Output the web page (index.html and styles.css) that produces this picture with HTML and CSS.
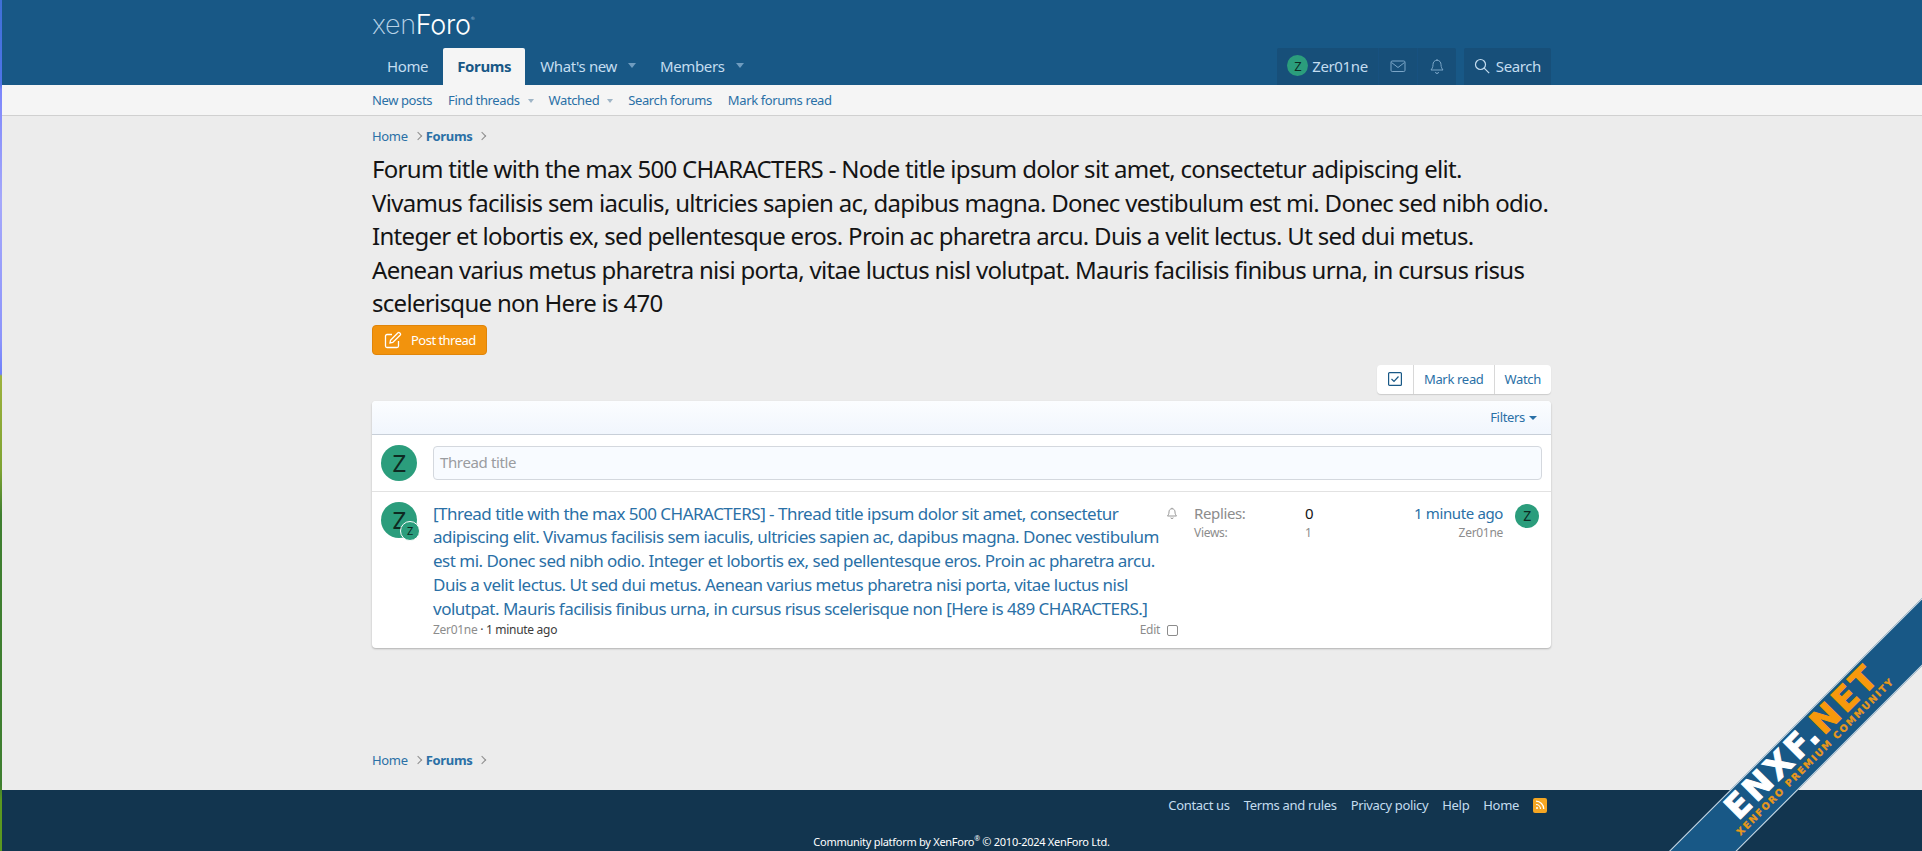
FILE: index.html
```html
<!DOCTYPE html>
<html>
<head>
  <meta charset="utf-8">
  <title>Forum title | XenForo</title>
  <link rel="stylesheet" href="styles.css">
</head>
<body>
  <div class="strip"></div>

  <header class="header">
    <div class="inner">
      <div class="logo"><span class="logo-xen">xen</span><span class="logo-foro">Foro</span><sup>®</sup></div>
      <div class="nav-row">
        <nav class="nav">
          <a class="nav-link">Home</a>
          <a class="nav-link active">Forums</a>
          <a class="nav-link">What's new<i class="caret"></i></a>
          <a class="nav-link">Members<i class="caret"></i></a>
        </nav>
        <div class="nav-user">
          <div class="nav-group">
            <a class="nav-item user"><span class="avatar avatar-xs">Z</span>Zer01ne</a>
            <a class="nav-item icon">
              <svg width="16" height="16" viewBox="0 0 16 16" fill="none" stroke="currentColor"><rect x="1" y="3" width="14" height="10.5" rx="1.2"/><path d="M1.5 4.5 8 9.5l6.500-5"/></svg>
            </a>
            <a class="nav-item icon">
              <svg width="16" height="16" viewBox="0 0 16 16" fill="none" stroke="currentColor"><path d="M8 1v1.300M8 2.300c-2.600 0-4 2-4 4.300 0 2.800-1 4-2 5.400h12c-1-1.400-2-2.600-2-5.400 0-2.300-1.400-4.300-4-4.300zM6.500 14a1.500 1.500 0 0 0 3 0"/></svg>
            </a>
          </div>
          <div class="nav-group">
            <a class="nav-item search">
              <svg width="16" height="16" viewBox="0 0 16 16" fill="none" stroke="currentColor" stroke-width="1.2"><circle cx="6.500" cy="6.500" r="5"/><path d="m10.200 10.200 5 5"/></svg>
              Search
            </a>
          </div>
        </div>
      </div>
    </div>
  </header>

  <div class="subnav">
    <div class="inner subnav-row">
      <a>New posts</a>
      <a>Find threads<i class="caret small"></i></a>
      <a>Watched<i class="caret small"></i></a>
      <a>Search forums</a>
      <a>Mark forums read</a>
    </div>
  </div>

  <main class="inner main">
    <ul class="crumbs">
      <li>Home</li>
      <li class="chev"></li>
      <li class="current">Forums</li>
      <li class="chev"></li>
    </ul>

    <h1 class="title">Forum title with the max 500 CHARACTERS - Node title ipsum dolor sit amet, consectetur adipiscing elit. Vivamus facilisis sem iaculis, ultricies sapien ac, dapibus magna. Donec vestibulum est mi. Donec sed nibh odio. Integer et lobortis ex, sed pellentesque eros. Proin ac pharetra arcu. Duis a velit lectus. Ut sed dui metus. Aenean varius metus pharetra nisi porta, vitae luctus nisl volutpat. Mauris facilisis finibus urna, in cursus risus scelerisque non Here is 470</h1>

    <a class="post-btn">
      <svg width="18" height="18" viewBox="0 0 18 18" fill="none" stroke="currentColor" stroke-width="1.300"><path d="M8 3.500H3a1.500 1.500 0 0 0-1.500 1.500v10A1.500 1.500 0 0 0 3 16.500h10a1.500 1.500 0 0 0 1.500-1.500v-5"/><path d="M6.500 9.200 14 1.700a1.100 1.100 0 0 1 1.500 0l.8.8a1.100 1.100 0 0 1 0 1.500l-7.500 7.500-2.800.5z"/></svg>
      Post thread
    </a>

    <div class="actions">
      <div class="btn-group">
        <a class="btn btn-check">
          <svg width="14" height="14" viewBox="0 0 14 14" fill="none" stroke="#185886" stroke-width="1.200"><rect x=".6" y=".6" width="12.800" height="12.800" rx="1"/><path d="m3.500 7 2.500 2.500 4.500-5"/></svg>
        </a>
        <a class="btn">Mark read</a>
        <a class="btn">Watch</a>
      </div>
    </div>

    <section class="block">
      <div class="filter-bar"><a>Filters<i class="caret blue"></i></a></div>

      <div class="quick">
        <span class="avatar avatar-m">Z</span>
        <div class="quick-input">Thread title</div>
      </div>

      <div class="thread">
        <div class="thread-avatar">
          <span class="avatar avatar-m">Z</span>
          <span class="avatar avatar-mini">Z</span>
        </div>
        <div class="thread-main">
          <div class="thread-top">
            <a class="thread-title">[Thread title with the max 500 CHARACTERS] - Thread title ipsum dolor sit amet, consectetur adipiscing elit. Vivamus facilisis sem iaculis, ultricies sapien ac, dapibus magna. Donec vestibulum est mi. Donec sed nibh odio. Integer et lobortis ex, sed pellentesque eros. Proin ac pharetra arcu. Duis a velit lectus. Ut sed dui metus. Aenean varius metus pharetra nisi porta, vitae luctus nisl volutpat. Mauris facilisis finibus urna, in cursus risus scelerisque non [Here is 489 CHARACTERS.]</a>
            <svg class="thread-bell" width="12" height="14" viewBox="0 0 16 16" fill="none" stroke="#8c8c8c" stroke-width="1.200"><path d="M8 1v1.300M8 2.300c-2.600 0-4 2-4 4.300 0 2.800-1 4-2 5.400h12c-1-1.400-2-2.600-2-5.400 0-2.300-1.400-4.300-4-4.300zM6.500 14a1.500 1.500 0 0 0 3 0"/></svg>
          </div>
          <div class="thread-meta">
            <div><span class="muted">Zer01ne</span> · 1 minute ago</div>
            <div class="thread-edit"><span class="muted">Edit</span><i class="check"></i></div>
          </div>
        </div>
        <dl class="stats">
          <div class="stat-big"><dt>Replies:</dt><dd>0</dd></div>
          <div class="stat-small"><dt>Views:</dt><dd>1</dd></div>
        </dl>
        <div class="latest">
          <a>1 minute ago</a>
          <span>Zer01ne</span>
        </div>
        <span class="avatar avatar-s">Z</span>
      </div>
    </section>

    <ul class="crumbs crumbs-bottom">
      <li>Home</li>
      <li class="chev"></li>
      <li class="current">Forums</li>
      <li class="chev"></li>
    </ul>
  </main>

  <footer class="footer">
    <div class="inner">
      <div class="footer-links">
        <a>Contact us</a>
        <a>Terms and rules</a>
        <a>Privacy policy</a>
        <a>Help</a>
        <a>Home</a>
        <span class="rss">
          <svg width="10" height="10" viewBox="0 0 10 10" fill="none" stroke="#fff" stroke-width="1.200"><path d="M1 1.200a8 8 0 0 1 7.800 7.800M1 4.500A4.500 4.500 0 0 1 5.500 9"/><circle cx="2" cy="8" r="1" fill="#fff" stroke="none"/></svg>
        </span>
      </div>
      <div class="copyright">Community platform by XenForo<sup>®</sup> © 2010-2024 XenForo Ltd.</div>
    </div>
  </footer>

  <div class="ribbon-box">
    <div class="ribbon">
      <div class="ribbon-big">ENXF<span class="dot">.</span><span class="net">NET</span></div>
      <div class="ribbon-small">XENFORO PREMIUM COMMUNITY</div>
    </div>
  </div>
</body>
</html>
```

FILE: styles.css
```css
:root {
  --blue: #185886;
  --link: #2a70a6;
  --muted: #8c8c8c;
  --green: #2b9d7c;
}
* {
  letter-spacing: -0.025em;
}
html, body {
  height: 851px;
  overflow: hidden;
}
body {
  margin: 0;
  padding-left: 2px;
  box-sizing: border-box;
  position: relative;
  display: flex;
  flex-direction: column;
  background: #ececec;
  color: #141414;
  font-family: "Noto Sans", sans-serif;
  font-size: 13px;
}
a {
  color: var(--link);
  text-decoration: none;
}
ul, dl, dd {
  margin: 0;
  padding: 0;
  list-style: none;
}
.inner {
  width: 1179px;
  margin: 0 auto 0 370px;
}
.strip {
  position: absolute;
  left: 0;
  top: 0;
  bottom: 0;
  width: 2px;
  background: linear-gradient(#3f6fd6 0, #4f74e8 84px, #7c86fb 90px, #a5a8fb 200px, #8c94fb 340px, #6f80fb 374px, #9db23e 376px, #7ea332 470px, #3f7f30 515px, #3f7f30 785px, #5b9820 800px);
}

/* header */
.header {
  background: var(--blue);
  height: 85px;
}
.logo {
  height: 48px;
  padding-top: 11px;
  box-sizing: border-box;
  font-family: "Inter", sans-serif;
  font-weight: 200;
  font-size: 27px;
  line-height: 28px;
}
.logo span {
  letter-spacing: -0.3px;
}
.logo-xen {
  color: #b9d2e6;
}
.logo-foro {
  color: #fff;
  font-weight: 300;
}
.logo sup {
  font-size: 6px;
  color: #b9d2e6;
  vertical-align: 13px;
  line-height: 0;
}
.nav-row {
  display: flex;
  justify-content: space-between;
  height: 37px;
}
.nav {
  display: flex;
}
.nav-link {
  display: flex;
  align-items: center;
  padding: 0 15px 2px;
  color: #c4ddf0;
  font-size: 15px;
}
.nav-link.active {
  padding: 0 14px 2px;
  background: #f5f5f5;
  color: var(--blue);
  font-weight: 700;
  border-radius: 2px 2px 0 0;
}
.caret {
  display: inline-block;
  width: 0;
  height: 0;
  margin: 0 -6px 0 11px;
  border-style: solid;
  border-color: transparent;
  border-width: 5px 4px 0;
  border-top-color: #6f9cbf;
}
.caret.small {
  margin: 0 -1px 0 8px;
  vertical-align: 2px;
  border-width: 4px 3.500px 0;
  border-top-color: #9fb5c6;
}
.caret.blue {
  margin: 0 0 0 4px;
  vertical-align: 2px;
  border-width: 4px 4px 0;
  border-top-color: var(--link);
}
.nav-user {
  display: flex;
  gap: 8px;
}
.nav-group {
  display: flex;
  background: #174f79;
  border-radius: 2px 2px 0 0;
}
.nav-item {
  display: flex;
  align-items: center;
  padding-bottom: 2px;
  color: #c4ddf0;
  font-size: 15px;
}
.nav-item.user {
  gap: 4px;
  padding: 0 10px 2px;
}
.nav-item.icon {
  width: 38px;
  justify-content: center;
  color: #7ba6c8;
  border-left: 1px solid #175180;
}
.nav-item.search {
  gap: 6px;
  padding: 0 10px 2px;
}
.avatar {
  display: inline-flex;
  align-items: center;
  justify-content: center;
  border-radius: 50%;
  background: var(--green);
  color: #0e2a22;
  flex: none;
}
.avatar-xs {
  width: 21px;
  height: 21px;
  font-size: 13px;
}
.avatar-s {
  width: 24px;
  height: 24px;
  font-size: 14px;
}
.avatar-m {
  width: 36px;
  height: 36px;
  font-size: 24px;
}
.avatar-mini {
  width: 18px;
  height: 18px;
  font-size: 11px;
  position: absolute;
  right: -3px;
  bottom: -3px;
  border: 1px solid #fff;
}

/* sub nav */
.subnav {
  background: #f5f5f5;
  border-bottom: 1px solid #d0d0d0;
  height: 30px;
}
.subnav-row {
  display: flex;
  align-items: center;
  gap: 16px;
  height: 30px;
  font-size: 13px;
}
.subnav-row a {
  letter-spacing: -0.03em;
}

/* main */
.main {
  flex: 1;
  display: flex;
  flex-direction: column;
}
.crumbs {
  display: flex;
  align-items: center;
  gap: 5px;
  height: 18px;
  margin-top: 11px;
  color: var(--link);
}
.crumbs .current {
  font-weight: 700;
}
.chev {
  width: 5px;
  height: 5px;
  margin-left: 2px;
  border-top: 1px solid #8c8c8c;
  border-right: 1px solid #8c8c8c;
  transform: rotate(45deg);
}
.crumbs-bottom {
  margin-top: auto;
  margin-bottom: 21px;
}
.title {
  margin: 7px 0 0;
  padding-right: 1px;
  font-size: 24px;
  font-weight: 400;
  line-height: 33.500px;
  letter-spacing: -0.029em;
  color: #141414;
}
.post-btn {
  display: inline-flex;
  align-items: center;
  align-self: flex-start;
  gap: 9px;
  height: 30px;
  margin-top: 5px;
  padding: 0 10px 0 11px;
  box-sizing: border-box;
  background: #f2930d;
  border: 1px solid #e0850a;
  border-radius: 4px;
  color: #fff;
  font-size: 13px;
  letter-spacing: -0.04em;
}
.actions {
  display: flex;
  justify-content: flex-end;
  margin-top: 10px;
}
.btn-group {
  display: flex;
  height: 29px;
  background: #fff;
  border-radius: 4px;
  box-shadow: 0 1px 1px #ccc;
}
.btn {
  display: flex;
  align-items: center;
  padding: 0 10px;
  border-left: 1px solid #d8d8d8;
  font-size: 13px;
}
.btn:first-child {
  border-left: 0;
}
.btn-check {
  padding: 0 11px;
}

/* thread list */
.block {
  margin-top: 7px;
  background: #fff;
  border-radius: 4px;
  box-shadow: 0 1px 2px rgba(0, 0, 0, 0.25);
}
.filter-bar {
  display: flex;
  justify-content: flex-end;
  align-items: center;
  height: 34px;
  padding-right: 14px;
  box-sizing: border-box;
  background: linear-gradient(#fbfdff, #f1f6fd);
  border-bottom: 1px solid #c8cfd8;
  border-radius: 4px 4px 0 0;
}
.quick {
  display: flex;
  align-items: center;
  gap: 16px;
  height: 57px;
  padding: 0 9px;
  box-sizing: border-box;
  border-bottom: 1px solid #e2e2e2;
}
.quick-input {
  flex: 1;
  height: 34px;
  line-height: 31px;
  padding-left: 6px;
  box-sizing: border-box;
  background: #f8fbff;
  border: 1px solid #d4d8de;
  border-radius: 4px;
  color: #9a9ca0;
  font-size: 15px;
}
.thread {
  display: flex;
  align-items: flex-start;
  padding: 10px 12px 10px 9px;
}
.thread-avatar {
  position: relative;
  width: 36px;
  height: 36px;
  flex: none;
}
.thread-main {
  width: 745px;
  margin-left: 16px;
}
.thread-top {
  display: flex;
  justify-content: space-between;
}
.thread-title {
  width: 733px;
  font-size: 17px;
  line-height: 23.800px;
  letter-spacing: -0.03em;
  color: var(--link);
}
.thread-bell {
  margin-top: 4px;
}
.thread-meta {
  display: flex;
  justify-content: space-between;
  font-size: 12px;
  line-height: 16px;
  margin-top: 2px;
  color: #3c3c3c;
}
.muted {
  color: #8c8c8c;
}
.thread-edit {
  display: flex;
  align-items: center;
  gap: 7px;
}
.check {
  display: block;
  width: 9px;
  height: 9px;
  border: 1px solid #8c8c8c;
  border-radius: 2px;
}
.stats {
  width: 123px;
  margin-left: 16px;
  flex: none;
}
.stats div {
  display: flex;
  justify-content: space-between;
}
.stats dt {
  color: #8c8c8c;
}
.stat-big {
  font-size: 15px;
  line-height: 22px;
}
.stat-big dd {
  color: #141414;
  width: 12px;
}
.stat-small {
  font-size: 12px;
  line-height: 18px;
}
.stat-small dd {
  color: #8c8c8c;
  width: 12px;
}
.latest {
  flex: 1;
  display: flex;
  flex-direction: column;
  align-items: flex-end;
  margin-right: 12px;
  font-size: 15px;
  line-height: 22px;
}
.latest span {
  color: #8c8c8c;
  font-size: 12px;
  line-height: 18px;
}
.thread .avatar-s {
  margin-top: 2px;
}

/* footer */
.footer {
  background: #12354f;
  height: 61px;
  color: #fff;
}
.footer-links {
  display: flex;
  justify-content: flex-end;
  align-items: center;
  gap: 14px;
  height: 30px;
  padding-right: 4px;
  font-size: 13px;
}
.footer-links a {
  color: #c4ddf0;
}
.rss {
  display: flex;
  align-items: center;
  justify-content: center;
  width: 14px;
  height: 15px;
  background: #f5a623;
  border-radius: 2px;
}
.copyright {
  text-align: center;
  font-size: 11px;
  line-height: 14px;
  margin-top: 15px;
}
.copyright sup {
  font-size: 7px;
  line-height: 0;
}

/* corner ribbon */
.ribbon-box {
  position: absolute;
  left: 1600px;
  top: 561px;
  width: 322px;
  height: 290px;
  overflow: hidden;
}
.ribbon {
  position: absolute;
  left: -50px;
  top: 169px;
  width: 500px;
  height: 48px;
  padding-top: 4px;
  box-sizing: border-box;
  transform: rotate(-45deg);
  background: var(--blue);
  border-top: 1px solid #cfdbe4;
  border-bottom: 1px solid #cfdbe4;
  text-align: center;
  font-family: "DejaVu Sans", sans-serif;
  font-weight: 700;
}
.ribbon-big {
  color: #fff;
  font-size: 33px;
  line-height: 24px;
  letter-spacing: 3px;
  -webkit-text-stroke: 1px currentColor;
  margin: 0 0 3px 20px;
}
.ribbon-big span {
  letter-spacing: 3px;
}
.net {
  color: #f7990c;
}
.ribbon-small {
  color: #e8981a;
  font-size: 9.500px;
  line-height: 10px;
  letter-spacing: 1.700px;
  -webkit-text-stroke: 0.3px currentColor;
  margin-left: 18px;
}
```
